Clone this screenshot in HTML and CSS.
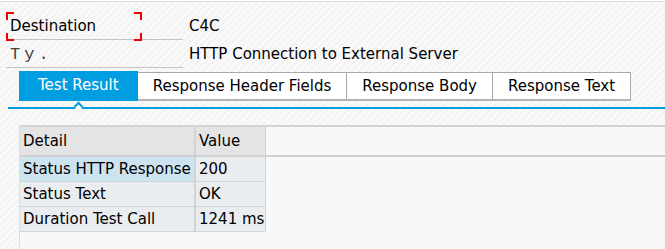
FILE: index.html
```html
<!DOCTYPE html>
<html lang="en">
<head>
  <meta charset="UTF-8" />
  <title>Test Connection</title>
  <link rel="stylesheet" href="styles.css">
</head>
<body>
  <div class="topbar"></div>

  <div class="fields">
    <div class="field-row">
      <div class="field-label focused">Destination</div>
      <div class="field-value">C4C</div>
    </div>
    <div class="field-row">
      <div class="field-label mono">Ty.</div>
      <div class="field-value">HTTP Connection to External Server</div>
    </div>
  </div>

  <div class="tabs">
    <div class="tab active">Test Result</div>
    <div class="tab">Response Header Fields</div>
    <div class="tab">Response Body</div>
    <div class="tab">Response Text</div>
  </div>
  <div class="tab-line"><span class="caret"></span></div>

  <div class="panel">
    <div class="grid-head">
      <div class="cell col-detail">Detail</div>
      <div class="cell col-value">Value</div>
    </div>
    <div class="grid-row">
      <div class="cell col-detail selected">Status HTTP Response</div>
      <div class="cell col-value">200</div>
    </div>
    <div class="grid-row">
      <div class="cell col-detail">Status Text</div>
      <div class="cell col-value">OK</div>
    </div>
    <div class="grid-row">
      <div class="cell col-detail">Duration Test Call</div>
      <div class="cell col-value">1241 ms</div>
    </div>
  </div>
</body>
</html>
```

FILE: styles.css
```css
body {
  margin: 0;
  font-family: "DejaVu Sans", Verdana, sans-serif;
  font-size: 15px;
  color: #000;
  height: 249px;
  overflow: hidden;
  background: repeating-linear-gradient(135deg, #f9f9f9 0, #f9f9f9 3px, #f3f3f3 3px, #f3f3f3 5px);
}

.topbar {
  height: 1px;
  background: #fff;
  border-bottom: 1px solid #dcdcdc;
}

/* header fields */
.fields {
  padding: 10px 0 0 6px;
}

.field-row {
  display: grid;
  grid-template-columns: 177px auto;
  column-gap: 6px;
  height: 27px;
}

.field-row:first-child {
  height: 28px;
}

.field-label {
  position: relative;
  padding: 2px 0 0 4px;
  line-height: 25px;
  border-bottom: 1px solid #c4c4c4;
}

.field-value {
  padding-top: 2px;
  line-height: 25px;
}

.mono {
  font-family: "Liberation Mono", monospace;
  font-size: 17px;
  letter-spacing: 4px;
  color: #444;
}

/* red focus brackets */
.focused::after {
  content: "";
  position: absolute;
  left: 0;
  top: 0;
  width: 136px;
  height: 29px;
  background:
    linear-gradient(#e00, #e00) left top / 8px 2px,
    linear-gradient(#e00, #e00) left top / 2px 8px,
    linear-gradient(#e00, #e00) right top / 8px 2px,
    linear-gradient(#e00, #e00) right top / 2px 8px,
    linear-gradient(#e00, #e00) left bottom / 8px 2px,
    linear-gradient(#e00, #e00) left bottom / 2px 8px,
    linear-gradient(#e00, #e00) right bottom / 8px 2px,
    linear-gradient(#e00, #e00) right bottom / 2px 8px;
  background-repeat: no-repeat;
}

/* tabs */
.tabs {
  display: flex;
  margin: 5px 0 0 19px;
  align-items: flex-start;
}

.tab {
  height: 26px;
  line-height: 26px;
  padding: 0 15px;
  background: #fff;
  border: 1px solid #a9a9a9;
  border-bottom: 2px solid #b4b4b4;
  border-left: none;
  white-space: nowrap;
}

.tab.active {
  height: 30px;
  line-height: 28px;
  margin-top: -1px;
  padding: 0 19px;
  background: #009de0;
  border: none;
  color: #fff;
}

.tab-line {
  position: relative;
  height: 2px;
  margin: 6px 0 0 8px;
  background: #009de0;
}

.caret {
  position: absolute;
  left: 67px;
  top: -4px;
  width: 5px;
  height: 5px;
  background: #fff;
  border-top: 2px solid #009de0;
  border-left: 2px solid #009de0;
  transform: rotate(45deg);
}

/* result grid */
.panel {
  margin: 16px 0 0 19px;
  height: 130px;
  background: #f8f8f8;
  border-top: 2px solid #d3d3d3;
  border-left: 1px solid #dedede;
}

.grid-head {
  display: flex;
  height: 28px;
  border-bottom: 2px solid #d0d0d0;
}

.grid-head .cell {
  background: #e4e4e4;
  line-height: 28px;
}

.grid-row {
  display: flex;
  height: 25px;
}

.cell {
  padding-left: 3px;
  line-height: 24px;
  border-right: 1px solid #cfd4d8;
  box-sizing: border-box;
  white-space: nowrap;
}

.grid-row .cell {
  background: #e9edf0;
  border-bottom: 1px solid #cfd4d8;
}

.col-detail {
  width: 176px;
  border-right: 2px solid #cfd4d8;
}

.col-value {
  width: 70px;
}

.grid-row .cell.selected {
  background: #cde3f0;
}
```
